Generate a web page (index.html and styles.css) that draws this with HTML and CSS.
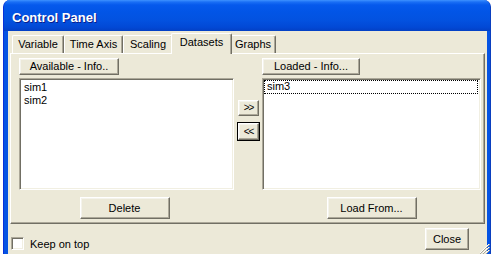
FILE: index.html
```html
<!DOCTYPE html>
<html>
<head>
<meta charset="utf-8">
<link rel="stylesheet" href="styles.css">
</head>
<body>
<div class="window">
  <div class="titlebar"><span class="title">Control Panel</span></div>
  <div class="client">
    <div class="tabs">
      <div class="tab w-var">Variable</div>
      <div class="tab w-time">Time Axis</div>
      <div class="tab w-scal">Scaling</div>
      <div class="tab w-data active">Datasets</div>
      <div class="tab w-graph">Graphs</div>
    </div>
    <div class="panel">
      <div class="col col-left">
        <button class="btn info info-avail">Available - Info..</button>
        <div class="list list-left">
          <div class="item">sim1</div>
          <div class="item">sim2</div>
        </div>
        <div class="actions actions-left"><button class="btn action">Delete</button></div>
      </div>
      <div class="mid">
        <button class="btn arrow">&gt;&gt;</button>
        <button class="btn arrow default">&lt;&lt;</button>
      </div>
      <div class="col col-right">
        <button class="btn info info-loaded">Loaded - Info...</button>
        <div class="list list-right">
          <div class="item focused">sim3</div>
        </div>
        <div class="actions"><button class="btn action">Load From...</button></div>
      </div>
    </div>
    <div class="footer">
      <label class="keep"><span class="checkbox"></span><span>Keep on top</span></label>
      <button class="btn close">Close</button>
    </div>
  </div>
  <div class="grip">
    <svg width="11" height="11" viewBox="0 0 11 11">
      <path d="M10 1 L1 10 M10 4 L4 10 M10 7 L7 10" stroke="#fff" stroke-width="1"/>
      <path d="M11 1 L1 11 M11 4 L4 11 M11 7 L7 11" stroke="#aca899" stroke-width="1"/>
    </svg>
  </div>
</div>
</body>
</html>
```

FILE: styles.css
```css
* { box-sizing: border-box; }
html, body { margin: 0; padding: 0; background: #fff; }
body {
  width: 492px; height: 254px; overflow: hidden;
  font-family: "Liberation Sans", Arial, sans-serif;
  font-size: 11px; color: #000;
}
.window {
  position: relative;
  margin-left: 3px;
  width: 488px;
  height: 260px;
  background: #0553e3;
  border-radius: 7px 7px 0 0;
  border-left: 1px solid #0831d9;
  border-right: 1px solid #0a3fbf;
  overflow: hidden;
}
.titlebar {
  height: 31px;
  background: linear-gradient(180deg, #3e92ff 0px, #1a6ff5 2px, #0559ec 5px, #0255e6 12px, #0352e0 20px, #0249d6 27px, #0340c4 31px);
  padding-left: 8px;
  display: flex; align-items: center;
}
.title {
  font-family: "Liberation Sans", Arial, sans-serif;
  font-weight: bold; font-size: 13px; color: #fff;
  text-shadow: 1px 1px 0 #0a1e8c;
  margin-top: 4px;
}
.client {
  margin: 0 3px 0 4px;
  background: #ece9d8;
  height: 229px;
  padding-left: 2px;
}
.tabs {
  display: flex; align-items: flex-end;
  height: 22px;
  padding-left: 2px;
}
.tab {
  height: 18px;
  background: #ece9d8;
  border-top: 1px solid #fff;
  border-left: 1px solid #fff;
  border-right: 1px solid #716f64;
  box-shadow: inset -1px 0 #aca899;
  border-radius: 2px 2px 0 0;
  text-align: center;
  line-height: 16px;
  white-space: nowrap;
}
.w-var { width: 52px; }
.w-time { width: 59px; }
.w-scal { width: 50px; }
.w-data { width: 57px; }
.w-graph { width: 46px; }
.tab.active {
  height: 21px;
  margin: 0 -2px -1px -2px;
  width: 61px;
  position: relative; z-index: 1;
  line-height: 17px;
}
.panel {
  width: 475px;
  height: 171px;
  border-top: 1px solid #fff;
  border-left: 1px solid #fff;
  border-right: 1px solid #716f64;
  border-bottom: 1px solid #716f64;
  box-shadow: inset -1px -1px #aca899;
  display: flex;
  padding: 4px 3px 0 8px;
}
.col { display: flex; flex-direction: column; align-items: flex-start; }
.col-left { width: 215px; }
.col-right { width: 219px; }
.mid {
  width: 28px;
  display: flex; flex-direction: column; align-items: center;
  padding-top: 42px;
  padding-left: 1px;
}
.btn {
  font-family: "Liberation Sans", Arial, sans-serif;
  font-size: 11px; color: #000;
  background: #ece9d8;
  border: 1px solid;
  border-color: #fff #716f64 #716f64 #fff;
  box-shadow: inset -1px -1px #aca899, inset 1px 1px #f4f3ec;
  padding: 0; margin: 0;
  line-height: 13px;
}
.info { height: 17px; }
.info-avail { width: 100px; }
.info-loaded { width: 98px; }
.list {
  margin-top: 3px;
  height: 112px;
  background: #fff;
  border: 1px solid;
  border-color: #aca899 #fff #fff #aca899;
  box-shadow: inset 1px 1px #716f64, inset -1px -1px #f1efe2;
  padding: 2px 2px 0 4px;
}
.list-left { width: 215px; }
.list-right { width: 219px; padding: 1px 2px 0 1px; }
.item { height: 13px; line-height: 13px; }
.focused {
  outline: 1px dotted #000;
  outline-offset: -1px;
  padding-left: 3px;
  height: 14px;
}
.actions {
  width: 100%;
  display: flex; justify-content: center;
  margin-top: 7px;
}
.actions-left { padding-right: 4px; }
.action { width: 90px; height: 22px; }
.arrow { width: 21px; height: 16px; font-size: 10px; line-height: 12px; letter-spacing: -1px; }
.arrow.default {
  margin-top: 7px;
  width: 21px; height: 17px;
  outline: 1px solid #000;
}
.footer {
  display: flex;
  justify-content: space-between;
  padding: 0 18px 0 1px;
}
.keep {
  display: flex; align-items: center; gap: 6px;
  margin-top: 13px;
}
.checkbox {
  width: 13px; height: 13px;
  background: #fff;
  border: 1px solid;
  border-color: #aca899 #fff #fff #aca899;
  box-shadow: inset 1px 1px #716f64, inset -1px -1px #f1efe2;
}
.close { width: 44px; height: 22px; margin-top: 4px; }
.grip {
  position: absolute;
  right: 0; top: 243px;
  width: 11px; height: 11px;
  line-height: 0;
}
```
